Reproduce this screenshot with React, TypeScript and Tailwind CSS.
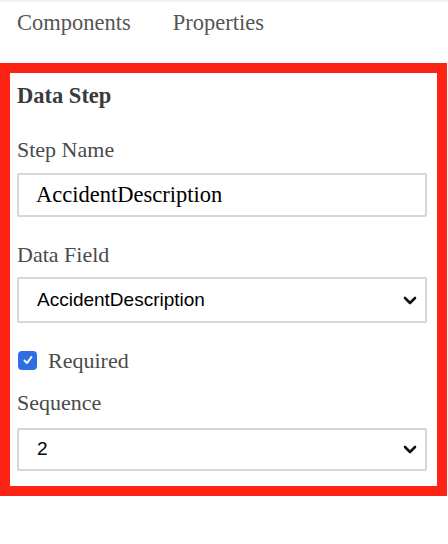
import React, { useState } from 'react';

const serif = { fontFamily: '"Liberation Serif", "Times New Roman", serif' };
const sans = { fontFamily: '"Liberation Sans", Arial, sans-serif' };

const Chevron: React.FC = () => (
  <svg width="14" height="9" viewBox="0 0 14 9" className="shrink-0">
    <polyline points="2,2 7,7 12,2" fill="none" stroke="#111" strokeWidth="2.6" strokeLinecap="round" strokeLinejoin="round" />
  </svg>
);

const FakeSelect: React.FC<{ value: string; className?: string }> = ({ value, className }) => (
  <div
    className={`w-[410px] flex items-center justify-between border-2 border-[#d6d6d6] rounded-[2px] bg-white pl-[18px] pr-[8px] text-[19px] text-black ${className ?? ''}`}
    style={sans}
  >
    <span>{value}</span>
    <Chevron />
  </div>
);

const App: React.FC = () => {
  const [required, setRequired] = useState(true);
  const [stepName, setStepName] = useState('AccidentDescription');

  return (
    <div className="w-[448px] h-[544px] bg-white border-t-2 border-[#f1f1f3]" style={serif}>
      {/* tabs */}
      <div className="flex gap-[42px] pl-[17px] pt-[9px] h-[61px] text-[22.5px] leading-[24px] text-[#555]">
        <span>Components</span>
        <span>Properties</span>
      </div>

      {/* highlighted properties panel */}
      <div className="w-[447px] border-[10px] border-[#fe2415] pl-[7px] pt-[11px] pb-[15px]">
        <div className="text-[22.5px] leading-[24px] font-bold text-[#3a3a3a]">Data Step</div>

        <div className="mt-[30px] text-[22px] leading-[24px] text-[#4a4a4a]">Step Name</div>
        <input
          value={stepName}
          onChange={(e) => setStepName(e.target.value)}
          className="mt-[11px] w-[410px] h-[44px] border-2 border-[#d6d6d6] rounded-[2px] pl-[17px] text-[22.5px] text-black outline-none"
          style={serif}
        />

        <div className="mt-[26px] text-[22px] leading-[24px] text-[#4a4a4a]">Data Field</div>
        <FakeSelect value="AccidentDescription" className="mt-[10px] h-[46px]" />

        <label className="mt-[25px] flex items-center h-[24px] text-[22px] text-[#4a4a4a]">
          <span
            onClick={() => setRequired(!required)}
            className={`ml-[1px] w-[19px] h-[19px] rounded-[4px] flex items-center justify-center ${required ? 'bg-[#2f6fe4]' : 'border border-gray-400 bg-white'}`}
          >
            {required && (
              <svg width="12" height="12" viewBox="0 0 12 12">
                <polyline points="2.5,6.5 5,9 9.5,3" fill="none" stroke="white" strokeWidth="2" strokeLinecap="round" strokeLinejoin="round" />
              </svg>
            )}
          </span>
          <span className="ml-[11px]">Required</span>
        </label>

        <div className="mt-[19px] text-[22px] leading-[24px] text-[#4a4a4a]">Sequence</div>
        <FakeSelect value="2" className="mt-[13px] h-[43px]" />
      </div>
    </div>
  );
};

export default App;
